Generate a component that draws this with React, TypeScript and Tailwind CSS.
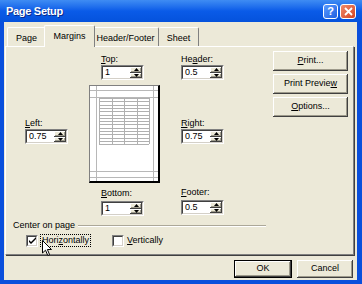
import React from "react";

const raised =
  "bg-[#ECE9D8] shadow-[inset_-1px_-1px_0_#404040,inset_1px_1px_0_#ffffff,inset_-2px_-2px_0_#9D9A8B]";

function U({ children }: { children: React.ReactNode }) {
  return <span className="underline underline-offset-[1px] decoration-[1px]">{children}</span>;
}

function SpinBtn({ up }: { up?: boolean }) {
  return (
    <div className={`flex-1 flex items-center justify-center ${raised}`}>
      <svg width="5" height="3" viewBox="0 0 5 3">
        {up ? <path d="M2.5 0 L5 3 L0 3 Z" fill="#000" /> : <path d="M0 0 L5 0 L2.5 3 Z" fill="#000" />}
      </svg>
    </div>
  );
}

function Spinner({ value }: { value: string }) {
  return (
    <div className="flex h-[15px] w-[43px] border border-t-[#808080] border-l-[#808080] border-b-white border-r-white">
      <div className="flex flex-1 border border-t-[#404040] border-l-[#404040] border-b-[#D4D0C8] border-r-[#D4D0C8] bg-white">
        <span className="flex-1 pl-[2px] text-[9px] leading-[11px] text-black">{value}</span>
        <div className="flex flex-col w-[12px]">
          <SpinBtn up />
          <SpinBtn />
        </div>
      </div>
    </div>
  );
}

function Label({ children }: { children: React.ReactNode }) {
  return <div className="h-[12px] leading-[12px] text-[9px] text-black whitespace-nowrap">{children}</div>;
}

function Btn({ children, w, h, def }: { children: React.ReactNode; w: string; h: string; def?: boolean }) {
  return (
    <div className={`${w} ${h} ${def ? "border border-black" : ""} flex`}>
      <div className={`flex-1 flex items-center justify-center text-[9px] text-black ${raised}`}>{children}</div>
    </div>
  );
}

function Preview() {
  const rows = [] as number[];
  for (let i = 0; i <= 14; i++) rows.push(96 - 83 + i * 3.3);
  const cols = [99, 111.5, 124, 136.5, 149].map((x) => x - 89);
  return (
    <div className="ml-0 mt-[5px] w-[71px] h-[98px] border-t border-l border-[#808080] border-r-2 border-b-2 border-r-black border-b-black bg-white">
      <svg width="68" height="95" viewBox="0 0 68 95" className="block">
        <g stroke="#B8B8B8" strokeWidth="1" shapeRendering="crispEdges">
          <line x1="0" y1="4.5" x2="68" y2="4.5" />
          <line x1="0" y1="11.5" x2="68" y2="11.5" />
          <line x1="0" y1="85.5" x2="68" y2="85.5" />
          <line x1="0" y1="91.5" x2="68" y2="91.5" />
          <line x1="6.5" y1="0" x2="6.5" y2="95" />
          <line x1="63.5" y1="0" x2="63.5" y2="95" />
        </g>
        <g stroke="#B0B0B0" strokeWidth="1" shapeRendering="crispEdges">
          {rows.map((y, i) => (
            <line key={"r" + i} x1={cols[0] - 1} y1={Math.round(y) - 1 + 0.5} x2={cols[4] - 1} y2={Math.round(y) - 1 + 0.5} />
          ))}
          {cols.map((x, i) => (
            <line key={"c" + i} x1={Math.round(x) - 1 + 0.5} y1={12} x2={Math.round(x) - 1 + 0.5} y2={58} />
          ))}
        </g>
      </svg>
    </div>
  );
}

function CheckBox({ checked }: { checked?: boolean }) {
  return (
    <div className="w-[12px] h-[12px] border border-t-[#808080] border-l-[#808080] border-b-white border-r-white flex">
      <div className="flex-1 border border-t-[#404040] border-l-[#404040] border-b-[#D4D0C8] border-r-[#D4D0C8] bg-white flex items-center justify-center">
        {checked && (
          <svg width="7" height="7" viewBox="0 0 7 7">
            <path d="M0 3 L2 5 L7 0 L7 2 L2 7 L0 5 Z" fill="#000" />
          </svg>
        )}
      </div>
    </div>
  );
}

export default function App() {
  return (
    <div
      className="w-[362px] h-[284px] flex flex-col bg-[#0A4FDC] overflow-hidden relative"
      style={{ fontFamily: '"Liberation Sans", Arial, sans-serif' }}
    >
      {/* Title bar */}
      <div className="h-[22px] flex items-center pl-[6px] pr-[6px] bg-gradient-to-b from-[#3F8CF3] via-[#0A5BE8] to-[#0552DC]">
        <span className="text-white font-bold text-[11px] tracking-[-0.3px] [text-shadow:1px_1px_0_#0A2A8A]">Page Setup</span>
        <div className="ml-auto flex gap-[2px] items-center">
          <div className="w-[15px] h-[15px] rounded-[3px] border border-white bg-gradient-to-br from-[#5B9BFF] to-[#1F5FE0] flex items-center justify-center">
            <span className="text-white font-bold text-[11px] leading-none">?</span>
          </div>
          <div className="w-[16px] h-[15px] rounded-[3px] border border-white bg-gradient-to-br from-[#F08A6A] to-[#D4411E] flex items-center justify-center">
            <svg width="9" height="9" viewBox="0 0 9 9">
              <path d="M1 1 L8 8 M8 1 L1 8" stroke="#fff" strokeWidth="1.8" />
            </svg>
          </div>
        </div>
      </div>

      {/* Body */}
      <div className="flex-1 ml-[4px] mr-[5px] mb-[4px] bg-[#ECE9D8] flex flex-col pl-[1px] pr-[3px] pt-[3px]">
        {/* Tabs */}
        <div className="flex items-end h-[21px] pl-[2px] relative z-10">
          <div className="w-[39px] h-[19px] border-t border-l border-white border-r border-r-[#808080] rounded-t-[2px] flex items-center justify-center pt-[3px] text-[9px]">
            Page
          </div>
          <div className="w-[51px] h-[22px] -ml-[2px] -mr-[2px] -mb-[1px] z-10 bg-[#ECE9D8] border-t border-l border-white border-r border-r-[#808080] rounded-t-[2px] flex items-center justify-center pt-[1px] text-[9px]">
            Margins
          </div>
          <div className="w-[66px] h-[19px] border-t border-white border-r border-r-[#808080] rounded-t-[2px] flex items-center justify-center pt-[3px] text-[9px]">
            Header/Footer
          </div>
          <div className="w-[40px] h-[19px] border-t border-white border-r border-r-[#808080] rounded-t-[2px] flex items-center justify-center pt-[3px] text-[9px]">
            Sheet
          </div>
        </div>

        {/* Panel */}
        <div className="h-[209px] border-t border-l border-white border-r border-b border-r-[#808080] border-b-[#808080] shadow-[1px_1px_0_#404040] flex flex-col">
          <div className="flex pl-[19px]">
            {/* Col A */}
            <div className="w-[43px] pt-[70px] flex flex-col">
              <Label>
                <U>L</U>eft:
              </Label>
              <Spinner value="0.75" />
            </div>
            {/* Col B */}
            <div className="w-[71px] ml-[21px] flex flex-col">
              <div className="ml-[12px] mt-[6px]">
                <Label>
                  <U>T</U>op:
                </Label>
                <Spinner value="1" />
              </div>
              <Preview />
              <div className="ml-[12px] mt-[4px]">
                <Label>
                  <U>B</U>ottom:
                </Label>
                <div className="mt-[2px]">
                  <Spinner value="1" />
                </div>
              </div>
            </div>
            {/* Col C */}
            <div className="w-[43px] ml-[21px] flex flex-col">
              <div className="mt-[6px]">
                <Label>
                  He<U>a</U>der:
                </Label>
                <Spinner value="0.5" />
              </div>
              <div className="mt-[37px]">
                <Label>
                  <U>R</U>ight:
                </Label>
                <Spinner value="0.75" />
              </div>
              <div className="mt-[42px]">
                <Label>
                  <U>F</U>ooter:
                </Label>
                <div className="mt-[2px]">
                  <Spinner value="0.5" />
                </div>
              </div>
            </div>
            {/* Col D */}
            <div className="w-[75px] ml-[49px] flex flex-col gap-[3px] pt-[4px]">
              <Btn w="w-[75px]" h="h-[20px]">
                <span>
                  <U>P</U>rint...
                </span>
              </Btn>
              <Btn w="w-[75px]" h="h-[20px]">
                <span>
                  Print Previe<U>w</U>
                </span>
              </Btn>
              <Btn w="w-[75px]" h="h-[20px]">
                <span>
                  <U>O</U>ptions...
                </span>
              </Btn>
            </div>
          </div>

          {/* Center on page group */}
          <div className="ml-[7px] w-[253px] mt-[3px] flex flex-col">
            <div className="flex items-center h-[12px]">
              <span className="text-[9px] leading-[12px] whitespace-nowrap">Center on page</span>
              <div className="flex-1 ml-[3px] mt-[1px] border-t border-t-[#ACA899] border-b border-b-white" />
            </div>
            <div className="flex items-center mt-[3px] pl-[13px] relative">
              <CheckBox checked />
              <div className="ml-[2px] border border-dotted border-black px-[1px] h-[13px] flex items-center text-[9px]">
                Hori<U>z</U>ontally
              </div>
              <div className="ml-[21px]">
                <CheckBox />
              </div>
              <span className="ml-[3px] text-[9px]">
                <U>V</U>ertically
              </span>
            </div>
          </div>
        </div>

        {/* Dialog buttons */}
        <div className="flex justify-end gap-[5px] mt-[5px] pr-[1px]">
          <Btn w="w-[58px]" h="h-[18px]" def>
            OK
          </Btn>
          <Btn w="w-[56px]" h="h-[18px]">
            Cancel
          </Btn>
        </div>
      </div>

      {/* Mouse cursor */}
      <svg className="absolute left-[42px] top-[240px]" width="11" height="17" viewBox="0 0 11 17">
        <path d="M0.5 0.5 L0.5 13 L3.5 10.2 L5.8 15.5 L7.6 14.7 L5.4 9.5 L9.5 9.5 Z" fill="#fff" stroke="#000" strokeWidth="1" />
      </svg>
    </div>
  );
}
